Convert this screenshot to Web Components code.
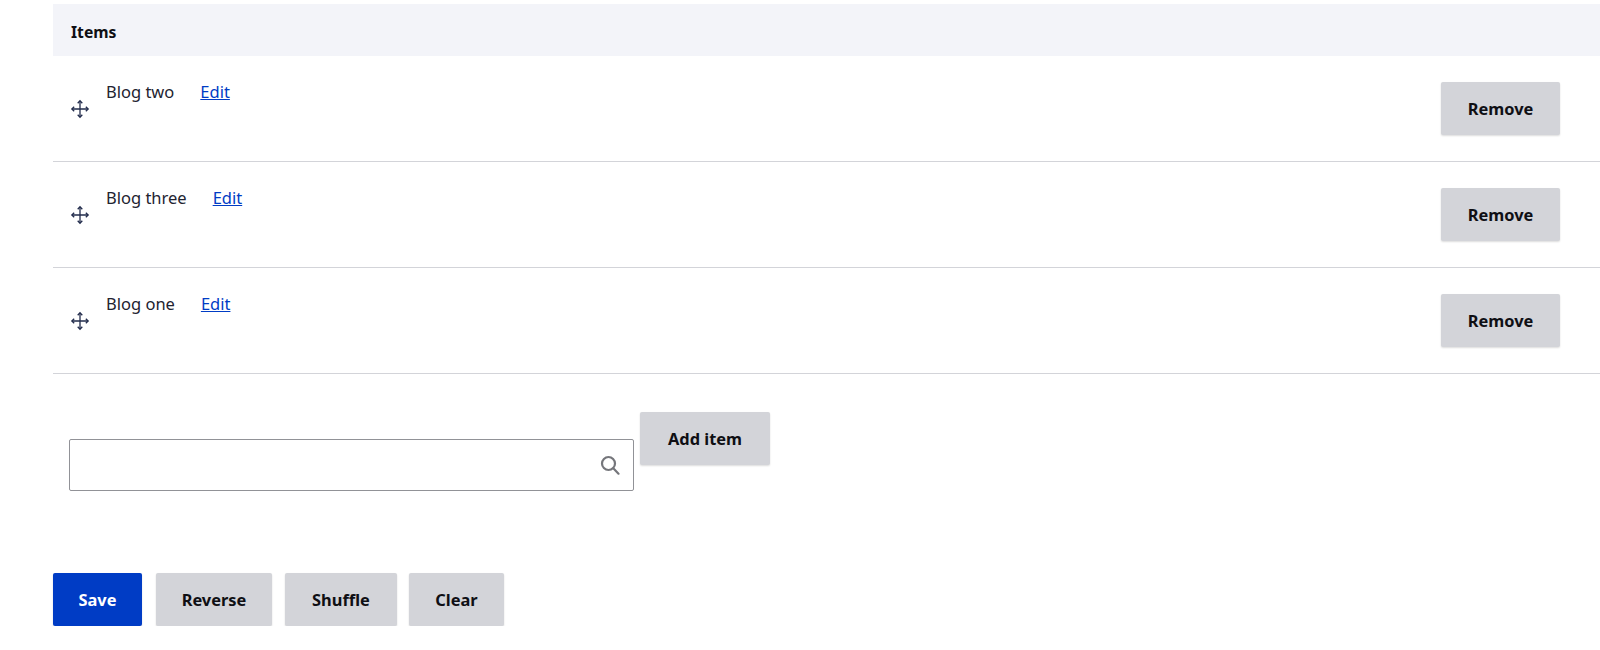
<!DOCTYPE html>
<html lang="en">
<head>
<meta charset="utf-8">
<title>Items</title>
<style>
  html, body { margin: 0; background: #fff; }
  body {
    font-family: "Noto Sans", "Open Sans", "Liberation Sans", sans-serif;
    font-size: 16.5px;
    color: #222330;
    overflow: hidden;
  }
</style>
</head>
<body>
<items-form>
  <items-table>
    <item-row label="Blog two"></item-row>
    <item-row label="Blog three"></item-row>
    <item-row label="Blog one"></item-row>
  </items-table>
  <add-item slot="add"></add-item>
  <action-button slot="actions" class="save" variant="primary" width="89">Save</action-button>
  <action-button slot="actions" width="116">Reverse</action-button>
  <action-button slot="actions" width="112">Shuffle</action-button>
  <action-button slot="actions" class="clear" width="95">Clear</action-button>
</items-form>

<script>
class ActionButton extends HTMLElement {
  constructor() {
    super();
    this.attachShadow({ mode: 'open' });
    const primary = this.getAttribute('variant') === 'primary';
    const width = this.getAttribute('width') || '119';
    this.shadowRoot.innerHTML = `
      <style>
        :host { display: inline-block; flex: none; }
        button {
          display: block;
          box-sizing: border-box;
          width: ${width}px;
          height: 53px;
          padding: 2px 0 0;
          border: 0;
          border-radius: 2px;
          background: ${primary ? '#003cc5' : '#d3d4d9'};
          color: ${primary ? '#fff' : '#0f0f14'};
          box-shadow: 0 1px 2px rgba(0, 0, 0, .14);
          font: 700 16.4px/1 "Noto Sans", "Open Sans", sans-serif;
          cursor: pointer;
        }
      </style>
      <button type="button"><slot></slot></button>
    `;
  }
}

class ItemRow extends HTMLElement {
  constructor() {
    super();
    this.attachShadow({ mode: 'open' });
    const label = this.getAttribute('label');
    this.shadowRoot.innerHTML = `
      <style>
        :host {
          display: flex;
          align-items: center;
          box-sizing: border-box;
          height: 106px;
          padding: 0 40px 0 17px;
          border-bottom: 1px solid #d3d4d9;
        }
        svg { flex: none; width: 20px; height: 20px; margin-right: 16px; }
        .text { flex: 1; align-self: flex-start; padding-top: 24px; line-height: 24px; color: #222330; }
        a { margin-left: 26px; color: #003cc5; text-decoration: underline; }
      </style>
      <svg viewBox="0 0 20 20" fill="none" stroke="#222c4c" stroke-width="1.3">
        <path d="M10 2v16M2 10h16"/>
        <path d="M7.7 4.2 10 1.8l2.3 2.4M7.7 15.8l2.3 2.4 2.3-2.4M4.2 7.7 1.8 10l2.4 2.3M15.8 7.7l2.4 2.3-2.4 2.3"/>
      </svg>
      <div class="text">${label}<a href="#">Edit</a></div>
      <action-button>Remove</action-button>
    `;
  }
}

class ItemsTable extends HTMLElement {
  constructor() {
    super();
    this.attachShadow({ mode: 'open' });
    this.shadowRoot.innerHTML = `
      <style>
        :host { display: block; }
        .head {
          box-sizing: border-box;
          height: 52px;
          padding: 2px 0 0 18px;
          background: #f3f4f9;
          font-size: 15.7px;
          font-weight: 700;
          line-height: 52px;
          color: #0f0f14;
        }
      </style>
      <div class="head">Items</div>
      <slot></slot>
    `;
  }
}

class AddItem extends HTMLElement {
  constructor() {
    super();
    this.attachShadow({ mode: 'open' });
    this.shadowRoot.innerHTML = `
      <style>
        :host { display: flex; align-items: flex-start; gap: 6px; padding-left: 16px; }
        .field {
          position: relative;
          margin-top: 27px;
          width: 565px;
          height: 52px;
          box-sizing: border-box;
          border: 1px solid #919297;
          border-radius: 2px;
        }
        input {
          box-sizing: border-box;
          width: 100%;
          height: 100%;
          padding: 0 40px 0 12px;
          border: 0;
          outline: 0;
          background: transparent;
          font: 16px "Noto Sans", sans-serif;
        }
        svg { position: absolute; right: 13px; top: 15px; width: 20px; height: 20px; }
      </style>
      <div class="field">
        <input type="text" aria-label="Item">
        <svg viewBox="0 0 20 20" fill="none" stroke="#75767b" stroke-width="2.2">
          <circle cx="8.5" cy="8.5" r="6.5"/>
          <path d="m13.3 13.3 5.2 5.4" stroke-linecap="round"/>
        </svg>
      </div>
      <action-button width="130">Add item</action-button>
    `;
  }
}

class ItemsForm extends HTMLElement {
  constructor() {
    super();
    this.attachShadow({ mode: 'open' });
    this.shadowRoot.innerHTML = `
      <style>
        :host { display: block; padding: 4px 0 0 53px; }
        .add { padding-top: 38px; }
        .actions { display: flex; gap: 13px; padding-top: 82px; }
        ::slotted(.save) { margin-right: 1px; }
        ::slotted(.clear) { margin-left: -1px; }
      </style>
      <slot></slot>
      <div class="add"><slot name="add"></slot></div>
      <div class="actions"><slot name="actions"></slot></div>
    `;
  }
}

customElements.define('action-button', ActionButton);
customElements.define('item-row', ItemRow);
customElements.define('items-table', ItemsTable);
customElements.define('add-item', AddItem);
customElements.define('items-form', ItemsForm);
</script>
</body>
</html>
